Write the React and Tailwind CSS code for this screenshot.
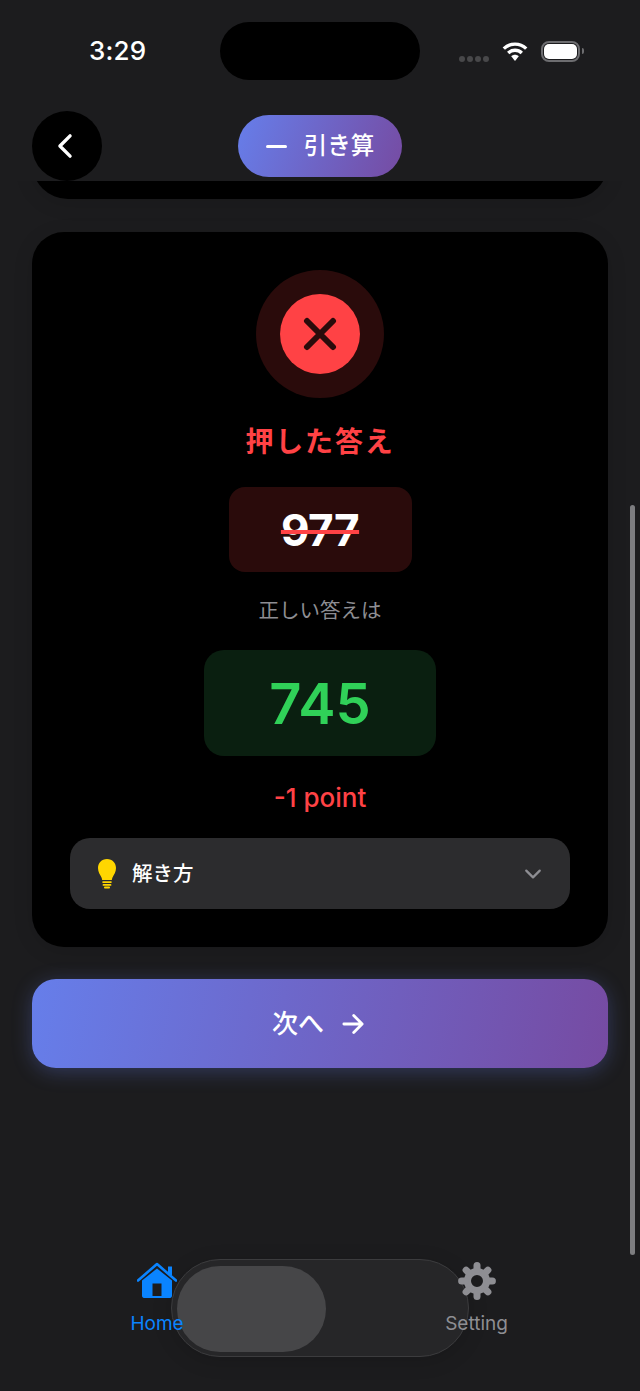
import React from "react";
import { IoChevronBack, IoChevronDown, IoArrowForward } from "react-icons/io5";

const font = { fontFamily: 'Inter, "Noto Sans CJK JP", sans-serif' };

function Wifi() {
  return (
    <svg width="26" height="20" viewBox="0 0 26 20" fill="none">
      <path d="M1.8 7.6C8 1.6 18 1.6 24.2 7.6" stroke="white" strokeWidth="3.4" />
      <path d="M6.2 12C10 8.4 16 8.4 19.8 12" stroke="white" strokeWidth="3.4" />
      <path d="M9.2 15.2 13 20 16.8 15.2C14.6 13.2 11.4 13.2 9.2 15.2Z" fill="white" />
    </svg>
  );
}

function Cross() {
  return (
    <svg width="34" height="34" viewBox="0 0 34 34" fill="none">
      <path d="M4 4 30 30M30 4 4 30" stroke="#2a0b0b" strokeWidth="6" strokeLinecap="round" />
    </svg>
  );
}

function Bulb() {
  return (
    <svg width="20" height="30" viewBox="0 0 20 30" fill="#ffd600">
      <path d="M10 0C4.5 0 1 4 1 9C1 13 3 15.5 4.5 18.5C5 19.8 5 20.5 5.2 21H14.8C15 20.5 15 19.8 15.5 18.5C17 15.5 19 13 19 9C19 4 15.5 0 10 0Z" />
      <rect x="5.2" y="22.2" width="9.6" height="1.8" rx="0.9" />
      <rect x="5.6" y="25" width="8.8" height="1.8" rx="0.9" />
      <rect x="7" y="27.6" width="6" height="1.8" rx="0.9" />
    </svg>
  );
}

function HomeIcon() {
  return (
    <svg width="40" height="36" viewBox="0 0 40 36" fill="none">
      <path d="M31 4.5H35V13H31Z" fill="#0a84ff" />
      <path d="M5 18.5 20 6.5 35 18.5V33.5C35 35 34.2 36 33 36H7C5.8 36 5 35 5 33.5Z" fill="#0a84ff" />
      <path d="M1 18.5 20 2 39 18.5" stroke="#0a84ff" strokeWidth="2.6" strokeLinecap="round" strokeLinejoin="round" />
      <rect x="15.5" y="21.5" width="9" height="12.5" fill="#1c1c1e" />
    </svg>
  );
}

function GearIcon() {
  const angles = [0, 45, 90, 135, 180, 225, 270, 315];
  return (
    <svg width="38" height="38" viewBox="0 0 38 38" fill="none">
      <circle cx="19" cy="19" r="9.5" stroke="#8e8e93" strokeWidth="7" />
      {angles.map((a) => (
        <path key={a} d="M19 7V3.6" stroke="#8e8e93" strokeWidth="7" strokeLinecap="round" transform={`rotate(${a} 19 19)`} />
      ))}
    </svg>
  );
}

export default function App() {
  return (
    <div style={font} className="relative flex h-[1391px] w-[640px] flex-col overflow-hidden bg-[#1c1c1e] text-white">
      {/* status bar */}
      <div className="mt-[22px] flex h-[58px] items-center pl-[89px]">
        <div className="w-[131px] text-[26px] font-medium leading-none tracking-[0.2px]">3:29</div>
        <div className="h-[58px] w-[200px] rounded-[29px] bg-black"></div>
        <div className="ml-[39px] mt-[15px] flex gap-[2px]">
          <span className="h-[6px] w-[6px] rounded-full bg-[#48484a]"></span>
          <span className="h-[6px] w-[6px] rounded-full bg-[#48484a]"></span>
          <span className="h-[6px] w-[6px] rounded-full bg-[#48484a]"></span>
          <span className="h-[6px] w-[6px] rounded-full bg-[#48484a]"></span>
        </div>
        <div className="ml-[13px] flex items-center">
          <Wifi />
        </div>
        <div className="ml-[13px] flex items-center">
          <div className="flex h-[21px] w-[39px] items-center justify-center rounded-[8px] border-2 border-[#6d6d70]">
            <div className="h-[15px] w-[33px] rounded-[5px] bg-white"></div>
          </div>
          <div className="ml-[2px] h-[6px] w-[2px] rounded-r-full bg-[#6d6d70]"></div>
        </div>
      </div>

      {/* header */}
      <div className="mt-[31px] flex h-[70px] px-8">
        <div className="flex h-[70px] w-[70px] items-center justify-center rounded-full bg-black">
          <IoChevronBack size={36} className="mr-[5px] text-white" />
        </div>
        <div className="ml-[136px] mt-[4px] flex h-[62px] w-[164px] items-center justify-center gap-[17px] rounded-[31px] bg-[linear-gradient(110deg,#667eea,#764ba2)]">
          <span className="h-[3px] w-[21px] rounded-full bg-white"></span>
          <span className="text-[23.5px] font-medium leading-none">引き算</span>
        </div>
      </div>

      {/* clipped previous card */}
      <div className="h-[51px] overflow-hidden px-8">
        <div className="-mt-[40px] h-[58px] rounded-b-[36px] bg-black shadow-[0_4px_20px_rgba(0,0,0,0.12)]"></div>
      </div>

      {/* result card */}
      <div className="mx-8 flex h-[715px] flex-col items-center rounded-[32px] bg-black px-[38px] pt-[38px] shadow-[0_4px_20px_rgba(0,0,0,0.12)]">
        <div className="flex h-[128px] w-[128px] items-center justify-center rounded-full bg-[#2a0b0b]">
          <div className="flex h-[80px] w-[80px] items-center justify-center rounded-full bg-[#ff4245]">
            <Cross />
          </div>
        </div>
        <div className="mt-[25px] text-[28px] font-semibold leading-[38px] tracking-[1.8px] text-[#ff4245]">押した答え</div>
        <div className="mt-[26px] flex h-[85px] w-[183px] items-center justify-center rounded-[16px] bg-[#2a0b0b]">
          <span className="text-[44px] font-bold leading-none tracking-[-0.5px] text-white line-through decoration-[#ff4245] decoration-[4px]">977</span>
        </div>
        <div className="mt-[25px] text-[20.5px] leading-[28px] text-[#8e8e93]">正しい答えは</div>
        <div className="mt-[25px] flex h-[106px] w-[232px] items-center justify-center rounded-[20px] bg-[#0a1f10] pt-[2px]">
          <span className="text-[56px] font-semibold leading-none text-[#30d158]">745</span>
        </div>
        <div className="mt-[25px] text-[26px] font-medium leading-[34px] text-[#ff4245]">-1 point</div>
        <div className="mt-[23px] flex h-[71px] w-[500px] items-center rounded-[20px] bg-[#2c2c2e] pl-[27px] pr-[25px]">
          <Bulb />
          <span className="ml-[15px] pt-[1px] text-[20.5px] font-medium leading-none">解き方</span>
          <IoChevronDown size={24} className="ml-auto text-[#8e8e93]" />
        </div>
      </div>

      {/* next button */}
      <div className="mx-8 mt-[32px] flex h-[89px] items-center justify-center gap-[14px] rounded-[24px] bg-[linear-gradient(100deg,#667eea,#764ba2)] shadow-[0_4px_20px_rgba(102,126,234,0.3)]">
        <span className="text-[26px] font-medium leading-none">次へ</span>
        <IoArrowForward size={30} className="text-white" />
      </div>

      {/* tab bar */}
      <div className="relative mt-[194px] flex h-[80px] justify-between pl-[131px] pr-[132px]">
        <div className="absolute left-[171px] top-[-3px] h-[98px] w-[298px] rounded-[49px] border border-[#3c3c3e] bg-[#262628] shadow-[0_4px_20px_rgba(0,0,0,0.15)]">
          <div className="ml-[5px] mt-[6px] h-[86px] w-[149px] rounded-[43px] bg-[#464648]"></div>
        </div>
        <div className="relative flex w-[52px] flex-col items-center">
          <HomeIcon />
          <span className="mt-[14px] whitespace-nowrap text-[19px] font-normal leading-[24px] text-[#0a84ff]">Home</span>
        </div>
        <div className="relative flex w-[63px] flex-col items-center">
          <GearIcon />
          <span className="mt-[12px] whitespace-nowrap text-[19px] font-normal leading-[24px] text-[#8e8e93]">Setting</span>
        </div>
      </div>

      {/* scroll indicator */}
      <div className="absolute left-[630px] top-[505px] h-[750px] w-[5px] rounded-full bg-[#7d7d80]"></div>
    </div>
  );
}
